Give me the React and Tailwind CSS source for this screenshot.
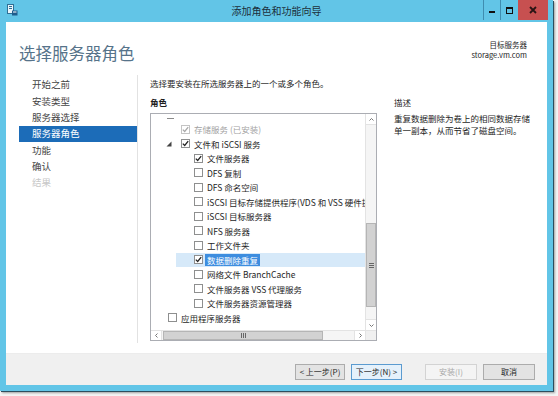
import React from 'react';

const navItems = [
  { label: '开始之前' },
  { label: '安装类型' },
  { label: '服务器选择' },
  { label: '服务器角色', active: true },
  { label: '功能' },
  { label: '确认' },
  { label: '结果', muted: true },
];

const roles = [
  { label: '存储服务 (已安装)', level: 1, checked: true, disabled: true },
  { label: '文件和 iSCSI 服务', level: 1, checked: true, expander: true },
  { label: '文件服务器', level: 2, checked: true },
  { label: 'DFS 复制', level: 2 },
  { label: 'DFS 命名空间', level: 2 },
  { label: 'iSCSI 目标存储提供程序(VDS 和 VSS 硬件提供程序)', level: 2 },
  { label: 'iSCSI 目标服务器', level: 2 },
  { label: 'NFS 服务器', level: 2 },
  { label: '工作文件夹', level: 2 },
  { label: '数据删除重复', level: 2, checked: true, selected: true },
  { label: '网络文件 BranchCache', level: 2 },
  { label: '文件服务器 VSS 代理服务', level: 2 },
  { label: '文件服务器资源管理器', level: 2 },
  { label: '应用程序服务器', level: 0 },
];

const indent = { 0: 'pl-[17px]', 1: 'pl-[30px]', 2: 'pl-[43px]' };

const Checkbox = ({ checked, disabled }) => (
  <span className={`flex h-[9px] w-[9px] shrink-0 items-center justify-center border bg-white ${disabled ? 'border-[#c4c4c4]' : 'border-[#8e8f8f]'}`}>
    {checked && (
      <svg width="7" height="7" viewBox="0 0 7 7">
        <path d="M0.8 3.6 L2.7 5.5 L6.2 1.2" fill="none" stroke={disabled ? '#a8a8a8' : '#222'} strokeWidth="1.3" />
      </svg>
    )}
  </span>
);

const RoleRow = ({ role }) => {
  if (role.selected) {
    return (
      <div className="ml-[25px] flex h-[14.5px] items-center bg-[#d6e9f9] pl-[18px]">
        <Checkbox checked />
        <span className="ml-[2px] bg-[#3d8ddf] px-[2px] leading-[12px] text-white">{role.label}</span>
      </div>
    );
  }
  return (
    <div className={`flex h-[14.5px] items-center ${role.expander ? 'pl-[15px]' : indent[role.level]}`}>
      {role.expander && (
        <svg width="6" height="6" viewBox="0 0 6 6" className="mr-[9px] shrink-0">
          <path d="M5.5 0.5 L5.5 5.5 L0.5 5.5 Z" fill="#444" />
        </svg>
      )}
      <Checkbox checked={role.checked} disabled={role.disabled} />
      <span className={`ml-[4px] leading-[12px] ${role.disabled ? 'text-[#a3a3a3]' : 'text-[#1e1e1e]'}`}>{role.label}</span>
    </div>
  );
};

const Button = ({ children, variant }) => {
  const styles = {
    normal: 'border-[#acacac] bg-[#e3e3e3] text-[#1e1e1e]',
    focus: 'border-[#5b9bd0] bg-[#e5f1fb] text-[#1e1e1e]',
    disabled: 'border-[#d3d3d3] bg-[#f4f4f4] text-[#a8a8a8]',
  };
  return (
    <div className={`flex h-[16px] items-center justify-center border text-[8px] leading-none ${styles[variant]}`}>
      {children}
    </div>
  );
};

export default function App() {
  return (
    <div className="h-[396px] w-[558px] overflow-hidden bg-[#f4f4f4] font-['Noto_Sans_CJK_SC',sans-serif]">
      <div className="flex h-[391px] w-[553px] flex-col bg-[#62c5e7] shadow-[1px_1px_0_#2d4e5e,2px_2px_2px_rgba(0,0,0,0.35)]">
        {/* title bar */}
        <div className="relative flex h-[22px] items-start">
          <div className="ml-[7px] mt-[4px]">
            <svg width="11" height="12" viewBox="0 0 11 12">
              <rect x="0.5" y="0.5" width="6" height="9" fill="#eaf6fb" stroke="#2f6f95" />
              <rect x="2" y="2" width="3" height="1" fill="#2f6f95" />
              <rect x="2" y="4" width="3" height="1" fill="#2f6f95" />
              <rect x="5" y="6.5" width="5.5" height="5" fill="#1f5d8c" />
              <rect x="6" y="7.5" width="3.5" height="1" fill="#fff" />
            </svg>
          </div>
          <div className="absolute inset-x-0 top-0 flex h-[22px] items-center justify-center text-[10px] leading-none text-[#1c2f3a]">
            添加角色和功能向导
          </div>
          <div className="ml-auto mr-[5px] flex h-[20px]">
            <div className="flex w-[17px] items-center justify-center border-l border-[#3f8db0]">
              <span className="mt-[3px] h-[2px] w-[6px] bg-[#111]" />
            </div>
            <div className="flex w-[18px] items-center justify-center border-l border-[#3f8db0]">
              <span className="h-[7px] w-[7px] border border-t-2 border-[#111]" />
            </div>
            <div className="flex w-[30px] items-center justify-center bg-[#c75050]">
              <svg width="8" height="8" viewBox="0 0 8 8">
                <path d="M1 1 L7 7 M7 1 L1 7" stroke="#2a1414" strokeWidth="1.8" />
              </svg>
            </div>
          </div>
        </div>

        {/* client */}
        <div className="mx-[6px] mb-[6px] flex flex-1 flex-col bg-white">
          {/* header */}
          <div className="flex h-[46px] items-start">
            <div className="ml-[13px] mt-[21px] text-[16.5px] leading-[20px] text-[#56738a]">选择服务器角色</div>
            <div className="ml-auto mr-[20px] mt-[18px] flex flex-col items-end text-[7.5px] leading-[10px] text-[#1e1e1e]">
              <span>目标服务器</span>
              <span>storage.vm.com</span>
            </div>
          </div>

          {/* main */}
          <div className="flex h-[285px] pb-[10px] pt-[7px]">
            <div className="flex w-[132px] flex-col border-r border-[#e2e2e2] pt-[2px] text-[9.5px]">
              {navItems.map((item) => (
                <div
                  key={item.label}
                  className={`ml-[13px] flex h-[16.3px] items-center pl-[13px] leading-none ${
                    item.active ? 'bg-[#1c6cb8] text-white' : item.muted ? 'text-[#c8c8c8]' : 'text-[#444]'
                  }`}
                >
                  {item.label}
                </div>
              ))}
            </div>

            <div className="flex flex-1 flex-col pl-[12px] pt-[2px] text-[8.5px] text-[#1e1e1e]">
              <div className="leading-[12px]">选择要安装在所选服务器上的一个或多个角色。</div>
              <div className="mt-[7px] flex gap-[17px]">
                <div className="flex w-[227px] flex-col">
                  <div className="font-bold leading-[12px]">角色</div>
                  <div className="mt-[5px] flex h-[228px] flex-col border border-[#abadb3]">
                    <div className="flex min-h-0 flex-1">
                      <div className="flex-1 overflow-hidden whitespace-nowrap pt-[4px]">
                        <div className="ml-[16px] h-px w-[7px] bg-[#8a8a8a]" />
                        <div className="mt-[3px]">
                          {roles.map((r) => (
                            <RoleRow key={r.label} role={r} />
                          ))}
                        </div>
                      </div>
                      {/* vertical scrollbar */}
                      <div className="flex w-[11px] flex-col border-l border-[#e3e3e3] bg-[#f5f5f5]">
                        <div className="flex h-[11px] items-center justify-center border-b border-[#e3e3e3] bg-white">
                          <svg width="5" height="3" viewBox="0 0 5 3"><path d="M0.5 2.5 L2.5 0.5 L4.5 2.5" fill="none" stroke="#777" /></svg>
                        </div>
                        <div className="h-[98px]" />
                        <div className="flex h-[84px] items-center justify-center border border-[#b5b5b5] bg-[#d2d2d2]">
                          <div className="flex flex-col gap-[1px]">
                            <span className="h-px w-[5px] bg-[#666]" />
                            <span className="h-px w-[5px] bg-[#666]" />
                            <span className="h-px w-[5px] bg-[#666]" />
                          </div>
                        </div>
                        <div className="flex-1" />
                        <div className="flex h-[11px] items-center justify-center border-t border-[#e3e3e3] bg-white">
                          <svg width="5" height="3" viewBox="0 0 5 3"><path d="M0.5 0.5 L2.5 2.5 L4.5 0.5" fill="none" stroke="#777" /></svg>
                        </div>
                      </div>
                    </div>
                    {/* horizontal scrollbar */}
                    <div className="flex h-[10px] border-t border-[#e3e3e3] bg-[#f5f5f5]">
                      <div className="flex w-[11px] items-center justify-center border-r border-[#e3e3e3] bg-white">
                        <svg width="3" height="5" viewBox="0 0 3 5"><path d="M2.5 0.5 L0.5 2.5 L2.5 4.5" fill="none" stroke="#777" /></svg>
                      </div>
                      <div className="ml-[1px] flex w-[160px] items-center justify-center border border-[#b5b5b5] bg-[#d2d2d2]">
                        <div className="flex gap-[1px]">
                          <span className="h-[5px] w-px bg-[#666]" />
                          <span className="h-[5px] w-px bg-[#666]" />
                          <span className="h-[5px] w-px bg-[#666]" />
                        </div>
                      </div>
                      <div className="flex-1" />
                      <div className="flex w-[11px] items-center justify-center border-l border-[#e3e3e3] bg-white">
                        <svg width="3" height="5" viewBox="0 0 3 5"><path d="M0.5 0.5 L2.5 2.5 L0.5 4.5" fill="none" stroke="#777" /></svg>
                      </div>
                      <div className="w-[11px] border-l border-[#e3e3e3] bg-[#f0f0f0]" />
                    </div>
                  </div>
                </div>
                <div className="flex w-[142px] flex-col">
                  <div className="leading-[12px]">描述</div>
                  <div className="mt-[4px] leading-[12px]">重复数据删除为卷上的相同数据存储单一副本，从而节省了磁盘空间。</div>
                </div>
              </div>
            </div>
          </div>

          {/* footer */}
          <div className="flex flex-1 items-start justify-end border-t border-[#ececec] bg-[#f0f0f0] pr-[12px] pt-[10px]">
            <div className="w-[50px]"><Button variant="normal">&lt; 上一步(P)</Button></div>
            <div className="ml-[6px] w-[51px]"><Button variant="focus">下一步(N) &gt;</Button></div>
            <div className="ml-[23px] w-[52px]"><Button variant="disabled">安装(I)</Button></div>
            <div className="ml-[6px] w-[52px]"><Button variant="normal">取消</Button></div>
          </div>
        </div>
      </div>
    </div>
  );
}
